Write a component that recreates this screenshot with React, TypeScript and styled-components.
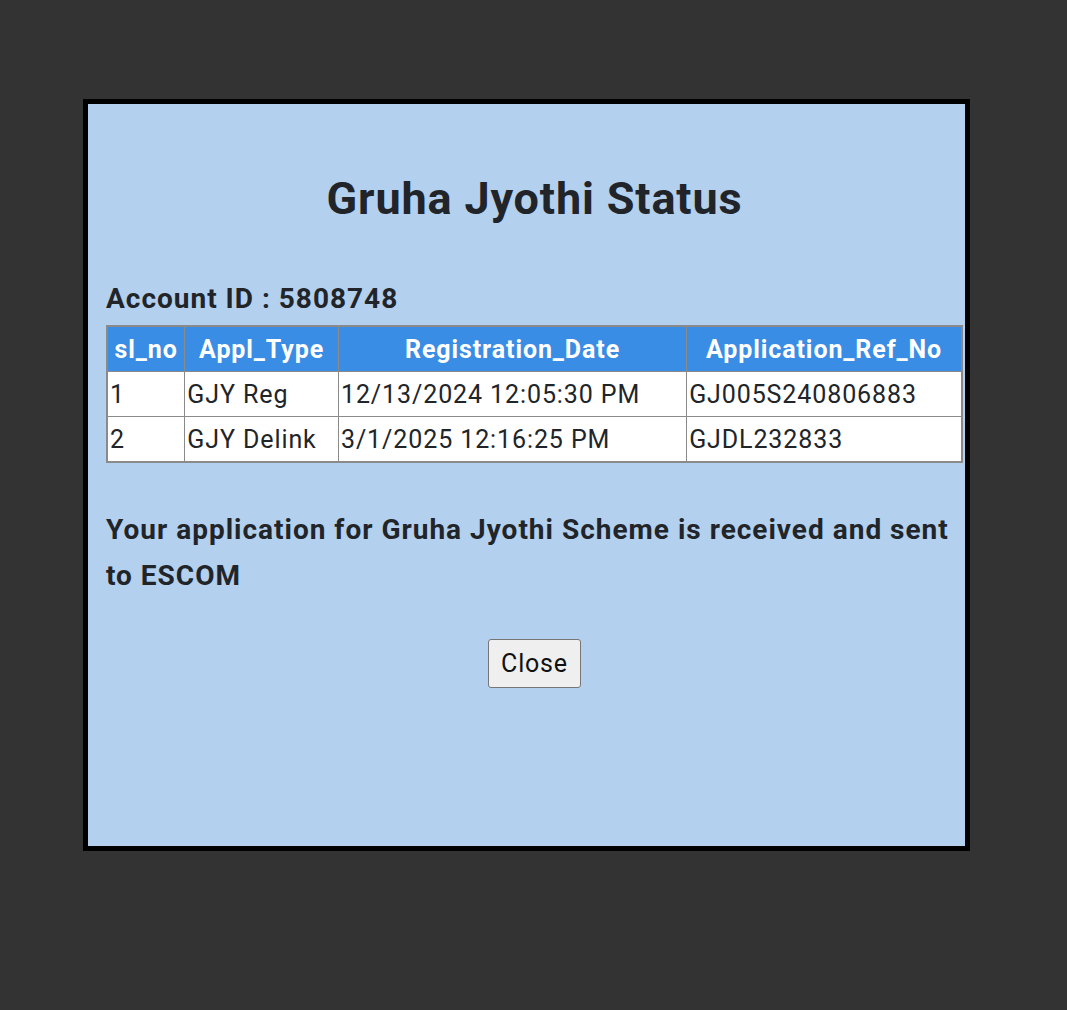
import React from "react";
import styled, { createGlobalStyle } from "styled-components";

const Global = createGlobalStyle`
  html, body { margin: 0; padding: 0; background: #333333; }
  body { font-family: Roboto, "Noto Sans", Arial, sans-serif; color: #212529; }
`;

const Page = styled.div`
  width: 1067px;
  height: 1010px;
  box-sizing: border-box;
  padding: 99px 0 0 83px;
`;

const Modal = styled.div`
  width: 887px;
  height: 752px;
  box-sizing: border-box;
  border: 5px solid #000;
  background: #b3d0ee;
  padding: 65px 0 0 18px;
`;

const Content = styled.div`
  width: 857px;
`;

const Title = styled.h1`
  margin: 0 0 52px 0;
  text-align: center;
  font-size: 45px;
  letter-spacing: 0.85px;
  font-weight: 700;
  line-height: 60px;
`;

const Account = styled.div`
  font-size: 28px;
  letter-spacing: 1px;
  font-weight: 700;
  line-height: 36px;
  margin-bottom: 8px;
`;

const Table = styled.table`
  border-collapse: collapse;
  width: 857px;
  font-size: 25px;
  letter-spacing: 0.9px;
  border: 2px solid #8a8a8a;
`;

const Th = styled.th`
  background: #3a8de4;
  color: #fff;
  font-weight: 700;
  height: 44px;
  padding: 0 2px;
  border: 1px solid #8a8a8a;
  text-align: center;
  white-space: nowrap;
`;

const Td = styled.td`
  background: #fff;
  height: 44px;
  padding: 0 2px;
  border: 1px solid #8a8a8a;
  text-align: left;
  white-space: nowrap;
`;

const Message = styled.p`
  margin: 44px 0 0 0;
  font-size: 28px;
  letter-spacing: 1px;
  font-weight: 700;
  line-height: 46px;
`;

const Actions = styled.div`
  display: flex;
  justify-content: center;
  margin-top: 40px;
`;

const Button = styled.button`
  font-family: Roboto, Arial, sans-serif;
  font-size: 25px;
  letter-spacing: 0.8px;
  color: #111;
  background: #efefef;
  border: 1px solid #767676;
  border-radius: 3px;
  width: 93px;
  height: 49px;
  padding: 0;
`;

const rows = [
  { sl: "1", type: "GJY Reg", date: "12/13/2024 12:05:30 PM", ref: "GJ005S240806883" },
  { sl: "2", type: "GJY Delink", date: "3/1/2025 12:16:25 PM", ref: "GJDL232833" },
];

export default function App() {
  return (
    <Page>
      <Global />
      <Modal>
        <Content>
          <Title>Gruha Jyothi Status</Title>
          <Account>Account ID : 5808748</Account>
          <Table>
            <colgroup>
              <col style={{ width: 78 }} />
              <col style={{ width: 154 }} />
              <col style={{ width: 349 }} />
              <col style={{ width: 276 }} />
            </colgroup>
            <thead>
              <tr>
                <Th>sl_no</Th>
                <Th>Appl_Type</Th>
                <Th>Registration_Date</Th>
                <Th>Application_Ref_No</Th>
              </tr>
            </thead>
            <tbody>
              {rows.map((r) => (
                <tr key={r.sl}>
                  <Td>{r.sl}</Td>
                  <Td>{r.type}</Td>
                  <Td>{r.date}</Td>
                  <Td>{r.ref}</Td>
                </tr>
              ))}
            </tbody>
          </Table>
          <Message>Your application for Gruha Jyothi Scheme is received and sent to ESCOM</Message>
          <Actions>
            <Button>Close</Button>
          </Actions>
        </Content>
      </Modal>
    </Page>
  );
}
